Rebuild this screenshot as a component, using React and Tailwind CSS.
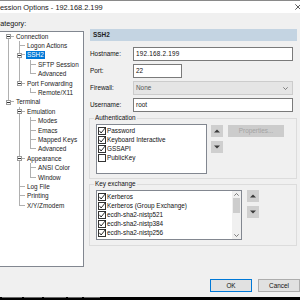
import React from "react";

const tree = [
  { label: "Connection", level: 0, box: true },
  { label: "Logon Actions", level: 1 },
  { label: "SSH2", level: 1, box: true, selected: true },
  { label: "SFTP Session", level: 2 },
  { label: "Advanced", level: 2 },
  { label: "Port Forwarding", level: 1, box: true },
  { label: "Remote/X11", level: 2 },
  { label: "Terminal", level: 0, box: true },
  { label: "Emulation", level: 1, box: true },
  { label: "Modes", level: 2 },
  { label: "Emacs", level: 2 },
  { label: "Mapped Keys", level: 2 },
  { label: "Advanced", level: 2 },
  { label: "Appearance", level: 1, box: true },
  { label: "ANSI Color", level: 2 },
  { label: "Window", level: 2 },
  { label: "Log File", level: 1 },
  { label: "Printing", level: 1 },
  { label: "X/Y/Zmodem", level: 1 },
];

function continues(i, c) {
  for (let j = i + 1; j < tree.length; j++) {
    if (tree[j].level < c) return false;
    if (tree[j].level === c) return true;
  }
  return false;
}

function TreeRow({ item, index }) {
  const cells = [];
  for (let c = 0; c <= item.level; c++) {
    const own = c === item.level;
    const cont = continues(index, c);
    const vTop = own ? index !== 0 : cont;
    const vBottom = cont;
    cells.push(
      <div key={c} className="relative w-[11px] h-full grid grid-cols-[6px_5px] grid-rows-2 shrink-0">
        <div className={vTop ? "border-r border-[#b0b0b0]" : ""} />
        <div className={own ? "border-b border-[#b0b0b0]" : ""} />
        <div className={vBottom ? "border-r border-[#b0b0b0]" : ""} />
        <div />
        {own && item.box && (
          <span className="absolute left-[3px] top-[2.2px] w-[5px] h-[5px] border border-[#9a9a9a] bg-white flex items-center justify-center">
            <span className="w-[3px] h-[1px] bg-[#333]" />
          </span>
        )}
      </div>
    );
  }
  return (
    <div className="flex h-[9.4px] items-stretch">
      {cells}
      <div className="flex items-center">
        <span
          className={
            item.selected
              ? "ml-[1px] px-[1px] bg-[#0078d7] text-white whitespace-nowrap leading-[8px]"
              : "ml-[1px] px-[1px] text-[#1a1a1a] whitespace-nowrap leading-[8px]"
          }
        >
          {item.label}
        </span>
      </div>
    </div>
  );
}

function Check({ checked }) {
  return (
    <svg width="8" height="8" viewBox="0 0 8 8" className="shrink-0">
      <rect x="0.5" y="0.5" width="7" height="7" fill="white" stroke="#333" strokeWidth="1" />
      {checked && (
        <path d="M1.4 3.8 L3.1 6 L7.6 0.4" stroke="#1a1a1a" strokeWidth="0.9" fill="none" />
      )}
    </svg>
  );
}

function CheckItem({ label, checked }) {
  return (
    <div className="flex items-center h-[9px] pl-[1px] gap-[1px] whitespace-nowrap">
      <Check checked={checked} />
      <span>{label}</span>
    </div>
  );
}

function ArrowBtn({ up }) {
  return (
    <div className="w-[12px] h-[12px] bg-[#cfcfcf] flex items-center justify-center">
      <svg width="6" height="4" viewBox="0 0 6 4">
        {up ? <path d="M0 3.5 L3 0.5 L6 3.5 Z" fill="#3a3a3a" /> : <path d="M0 0.5 L3 3.5 L6 0.5 Z" fill="#3a3a3a" />}
      </svg>
    </div>
  );
}

function Field({ label, children }) {
  return (
    <div className="flex items-center h-[14px]">
      <span className="w-[44px] pl-[1px] shrink-0 whitespace-nowrap">{label}</span>
      {children}
    </div>
  );
}

export default function App() {
  return (
    <div className="w-[300px] h-[300px] overflow-hidden bg-[#f0f0f0] flex flex-col font-['Liberation_Sans',Arial,sans-serif] text-[#111] text-[6.4px] leading-[8px]">
      {/* Title bar */}
      <div className="h-[13px] shrink-0 bg-white border-t border-[#8a8a8a] flex items-center justify-between">
        <span className="ml-[-5px] text-[7.4px] leading-[9px] whitespace-nowrap text-[#1a1a1a]">
          Session Options - 192.168.2.199
        </span>
        <svg width="6" height="6" viewBox="0 0 6 6" className="mr-[-1px]">
          <path d="M0.3 0.3 L5.7 5.7 M5.7 0.3 L0.3 5.7" stroke="#333" strokeWidth="0.8" />
        </svg>
      </div>

      {/* Body */}
      <div className="flex-1 flex flex-col">
        <div className="flex">
          {/* Left column */}
          <div className="ml-[-2px] w-[86px] shrink-0 pt-[7px] flex flex-col">
            <div className="h-[8px] text-[7.2px] leading-[8px] ml-[-3px] whitespace-nowrap">Category:</div>
            <div className="mt-[3px] h-[236px] bg-white border border-[#828790] pl-[4px] overflow-hidden">
              {tree.map((item, i) => (
                <TreeRow key={i} item={item} index={i} />
              ))}
            </div>
          </div>

          {/* Right column */}
          <div className="ml-[5px] w-[208px] shrink-0 pt-[16px] flex flex-col">
            <div className="ml-[1px] h-[12px] bg-[#c4d4e2] flex items-center pl-[3px] font-bold text-[#222]">SSH2</div>

            <div className="mt-[6px] flex flex-col gap-[3px]">
              <Field label="Hostname:">
                <div className="w-[160px] h-full border border-[#7a7a7a] bg-white px-[2px] flex items-center tracking-[0.2px]">
                  192.168.2.199
                </div>
              </Field>
              <Field label="Port:">
                <div className="w-[49px] h-full border border-[#7a7a7a] bg-white px-[2px] flex items-center">22</div>
              </Field>
              <Field label="Firewall:">
                <div className="w-[160px] h-full border border-[#cccccc] bg-[#e5e5e5] px-[2px] flex items-center justify-between text-[#555]">
                  <span>None</span>
                  <svg width="5" height="3" viewBox="0 0 5 3" className="mr-[2px]">
                    <path d="M0.3 0.3 L2.5 2.5 L4.7 0.3" stroke="#555" strokeWidth="0.7" fill="none" />
                  </svg>
                </div>
              </Field>
              <Field label="Username:">
                <div className="w-[160px] h-full border border-[#7a7a7a] bg-white px-[2px] flex items-center">root</div>
              </Field>
            </div>

            <fieldset className="mt-[2px] border border-[#dcdcdc] pl-[6px] pr-[4px] pt-[2px] pb-[4px]">
              <legend className="ml-[-2px] px-[1px] leading-[8px]">Authentication</legend>
              <div className="flex items-start">
                <div className="w-[111px] h-[50px] border border-[#828790] bg-white pt-[1px] flex flex-col shrink-0">
                  <CheckItem label="Password" checked />
                  <CheckItem label="Keyboard Interactive" checked />
                  <CheckItem label="GSSAPI" checked />
                  <CheckItem label="PublicKey" checked={false} />
                </div>
                <div className="ml-[4px] mt-[1px] flex flex-col gap-[4px]">
                  <ArrowBtn up />
                  <ArrowBtn />
                </div>
                <div className="ml-[5px] mt-[1px] w-[56px] h-[12px] bg-[#cccccc] text-[#a3a3a3] flex items-center justify-center whitespace-nowrap">
                  Properties...
                </div>
              </div>
            </fieldset>

            <fieldset className="mt-[1px] border border-[#dcdcdc] pl-[6px] pr-[4px] pt-[2px] pb-[5px]">
              <legend className="ml-[-2px] px-[1px] leading-[8px]">Key exchange</legend>
              <div className="flex items-start">
                <div className="w-[146px] h-[50px] border border-[#828790] bg-white flex shrink-0">
                  <div className="flex-1 pt-[1px] flex flex-col overflow-hidden">
                    <CheckItem label="Kerberos" checked />
                    <CheckItem label="Kerberos (Group Exchange)" checked />
                    <CheckItem label="ecdh-sha2-nistp521" checked />
                    <CheckItem label="ecdh-sha2-nistp384" checked />
                    <CheckItem label="ecdh-sha2-nistp256" checked />
                  </div>
                  <div className="w-[9px] bg-[#f0f0f0] flex flex-col shrink-0">
                    <div className="h-[7px] flex items-center justify-center">
                      <svg width="5" height="3" viewBox="0 0 5 3">
                        <path d="M0.3 2.7 L2.5 0.5 L4.7 2.7" stroke="#606060" strokeWidth="0.8" fill="none" />
                      </svg>
                    </div>
                    <div className="h-[15px] mx-[1px] bg-[#cdcdcd]" />
                    <div className="flex-1" />
                    <div className="h-[7px] flex items-center justify-center">
                      <svg width="5" height="3" viewBox="0 0 5 3">
                        <path d="M0.3 0.3 L2.5 2.5 L4.7 0.3" stroke="#606060" strokeWidth="0.8" fill="none" />
                      </svg>
                    </div>
                  </div>
                </div>
                <div className="ml-[5px] flex flex-col gap-[4px]">
                  <ArrowBtn up />
                  <ArrowBtn />
                </div>
              </div>
            </fieldset>
          </div>
        </div>

        {/* Buttons */}
        <div className="mt-[12px] h-[13px] flex justify-end gap-[6px]">
          <div className="w-[42px] h-full border border-[#0078d7] bg-[#e1e1e1] flex items-center justify-center">OK</div>
          <div className="w-[42px] h-full border border-[#adadad] bg-[#e1e1e1] flex items-center justify-center">Cancel</div>
        </div>
      </div>

      {/* Taskbar strip */}
      <div className="h-[3px] shrink-0 bg-black flex items-start gap-[2px] pl-[2px]">
        <span className="w-[20px] h-[1px] bg-[#6a6a6a]" />
        <span className="w-[18px] h-[1px] bg-[#6a6a6a]" />
        <span className="w-[22px] h-[1px] bg-[#6a6a6a]" />
        <span className="w-[14px] h-[1px] bg-[#6a6a6a]" />
        <span className="w-[16px] h-[1px] bg-[#6a6a6a]" />
      </div>
    </div>
  );
}
